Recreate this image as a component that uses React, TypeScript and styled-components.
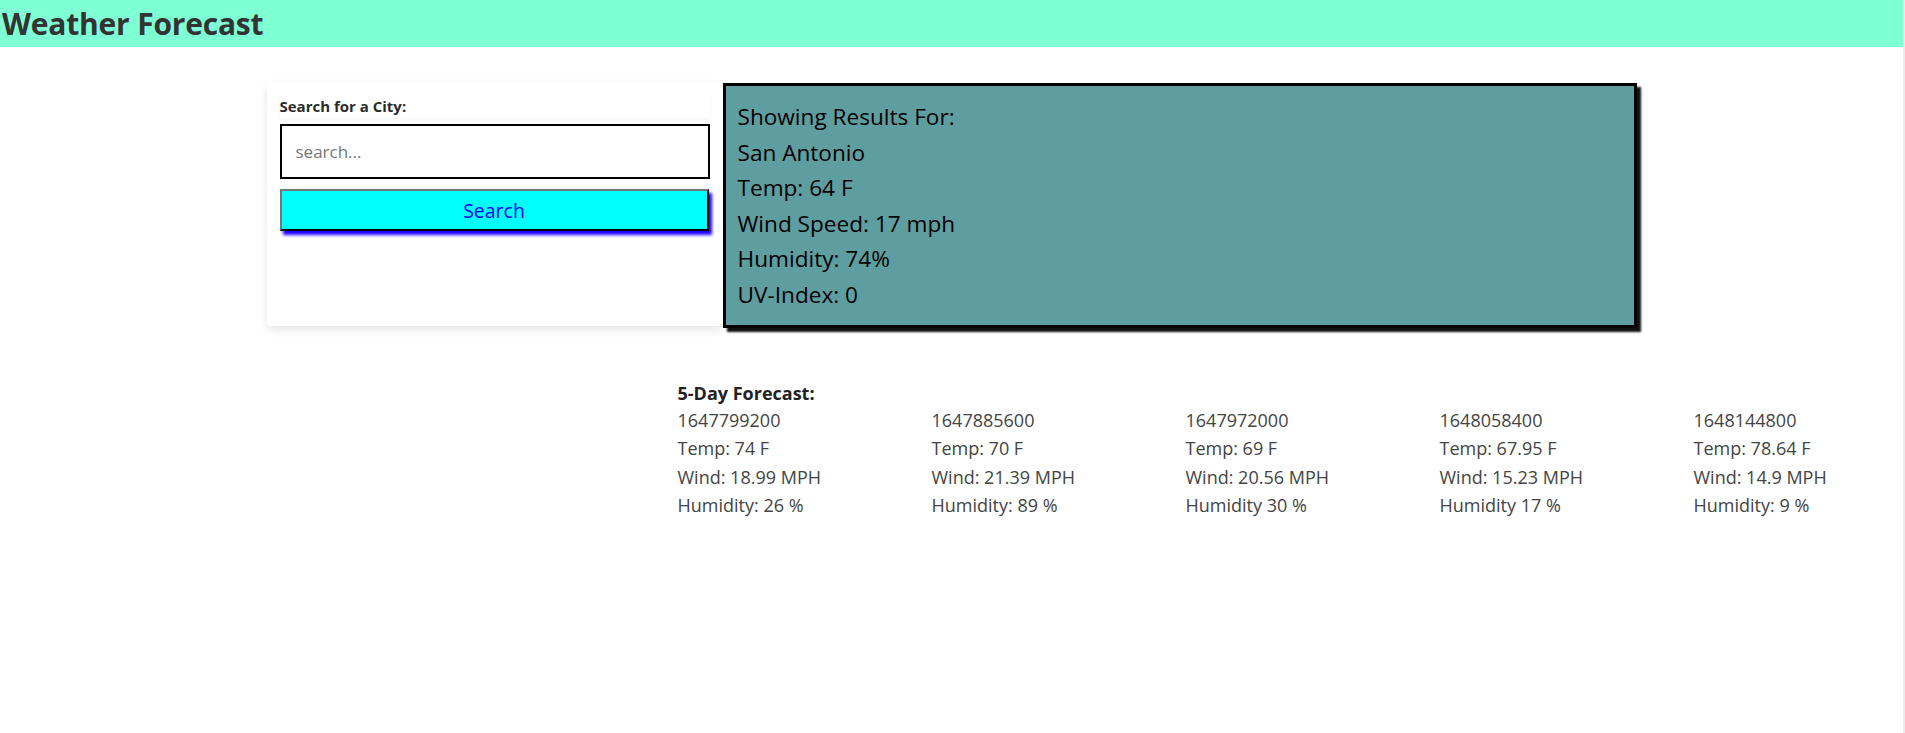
import styled, { createGlobalStyle } from "styled-components";

const GlobalStyle = createGlobalStyle`
  html, body {
    margin: 0;
    padding: 0;
    background: #ececec;
  }
  body {
    font-family: "Open Sans", "Noto Sans", Arial, sans-serif;
    color: #333;
  }
`;

const Page = styled.div`
  width: 1903px;
  min-height: 100vh;
  background: #fff;
`;

const Header = styled.header`
  background: #7fffd4;
  height: 47px;
  display: flex;
  align-items: center;
`;

const Title = styled.h1`
  margin: 0 0 0 2px;
  font-size: 30px;
  font-weight: 700;
  color: #333;
  letter-spacing: -0.2px;
`;

const Container = styled.main`
  width: 1370px;
  margin: 35px auto 0;
`;

const TopRow = styled.div`
  display: flex;
  align-items: flex-start;
`;

const SearchCard = styled.section`
  box-sizing: border-box;
  width: 456px;
  height: 244px;
  padding: 13px 13px 0 13px;
  background: #fff;
  border-radius: 4px;
  box-shadow: 0 4px 10px rgba(0, 0, 0, 0.1);
`;

const Label = styled.label`
  display: block;
  height: 23px;
  line-height: 23px;
  font-size: 15px;
  font-weight: 700;
  color: #2b2b2b;
  box-shadow: 0 2px 4px rgba(0, 0, 0, 0.04);
`;

const SearchInput = styled.input`
  box-sizing: border-box;
  display: block;
  width: 430px;
  height: 55px;
  margin-top: 6px;
  padding: 0 14px;
  border: 2px solid #000;
  font-family: inherit;
  font-size: 17px;
  outline: none;
  &::placeholder {
    color: #777;
  }
`;

const SearchButton = styled.button`
  box-sizing: border-box;
  display: block;
  width: 429px;
  height: 42px;
  margin-top: 10px;
  background: #00ffff;
  color: #0000ff;
  font-family: inherit;
  font-size: 19.5px;
  border: 2px solid;
  border-color: #767676 #000 #000 #767676;
  box-shadow: 3px 4px 3px #2200ff;
  cursor: pointer;
`;

const Results = styled.section`
  box-sizing: border-box;
  width: 914px;
  height: 245px;
  margin-top: 1px;
  padding: 13px 12px 0;
  background: #5f9ea0;
  border: 3px solid #000;
  box-shadow: 4px 4px 2px #111;
`;

const ResultLine = styled.div`
  font-size: 22.6px;
  line-height: 35.6px;
  color: #000;
`;

const Forecast = styled.section`
  margin: 52px 0 0 30%;
  color: #444;
  font-size: 18px;
  line-height: 28.4px;
`;

const ForecastHeading = styled.div`
  font-weight: 700;
  color: #222;
  line-height: 26px;
`;

const Days = styled.div`
  display: grid;
  grid-template-columns: repeat(5, 254px);
`;

const Day = styled.div`
  display: flex;
  flex-direction: column;
`;

const days = [
  { dt: "1647799200", temp: "Temp: 74 F", wind: "Wind: 18.99 MPH", hum: "Humidity: 26 %" },
  { dt: "1647885600", temp: "Temp: 70 F", wind: "Wind: 21.39 MPH", hum: "Humidity: 89 %" },
  { dt: "1647972000", temp: "Temp: 69 F", wind: "Wind: 20.56 MPH", hum: "Humidity 30 %" },
  { dt: "1648058400", temp: "Temp: 67.95 F", wind: "Wind: 15.23 MPH", hum: "Humidity 17 %" },
  { dt: "1648144800", temp: "Temp: 78.64 F", wind: "Wind: 14.9 MPH", hum: "Humidity: 9 %" },
];

export default function App() {
  return (
    <Page>
      <GlobalStyle />
      <Header>
        <Title>Weather Forecast</Title>
      </Header>
      <Container>
        <TopRow>
          <SearchCard>
            <Label htmlFor="city">Search for a City:</Label>
            <SearchInput id="city" placeholder="search..." />
            <SearchButton>Search</SearchButton>
          </SearchCard>
          <Results>
            <ResultLine>Showing Results For:</ResultLine>
            <ResultLine>San Antonio</ResultLine>
            <ResultLine>Temp: 64 F</ResultLine>
            <ResultLine>Wind Speed: 17 mph</ResultLine>
            <ResultLine>Humidity: 74%</ResultLine>
            <ResultLine>UV-Index: 0</ResultLine>
          </Results>
        </TopRow>
        <Forecast>
          <ForecastHeading>5-Day Forecast:</ForecastHeading>
          <Days>
            {days.map((d) => (
              <Day key={d.dt}>
                <span>{d.dt}</span>
                <span>{d.temp}</span>
                <span>{d.wind}</span>
                <span>{d.hum}</span>
              </Day>
            ))}
          </Days>
        </Forecast>
      </Container>
    </Page>
  );
}
